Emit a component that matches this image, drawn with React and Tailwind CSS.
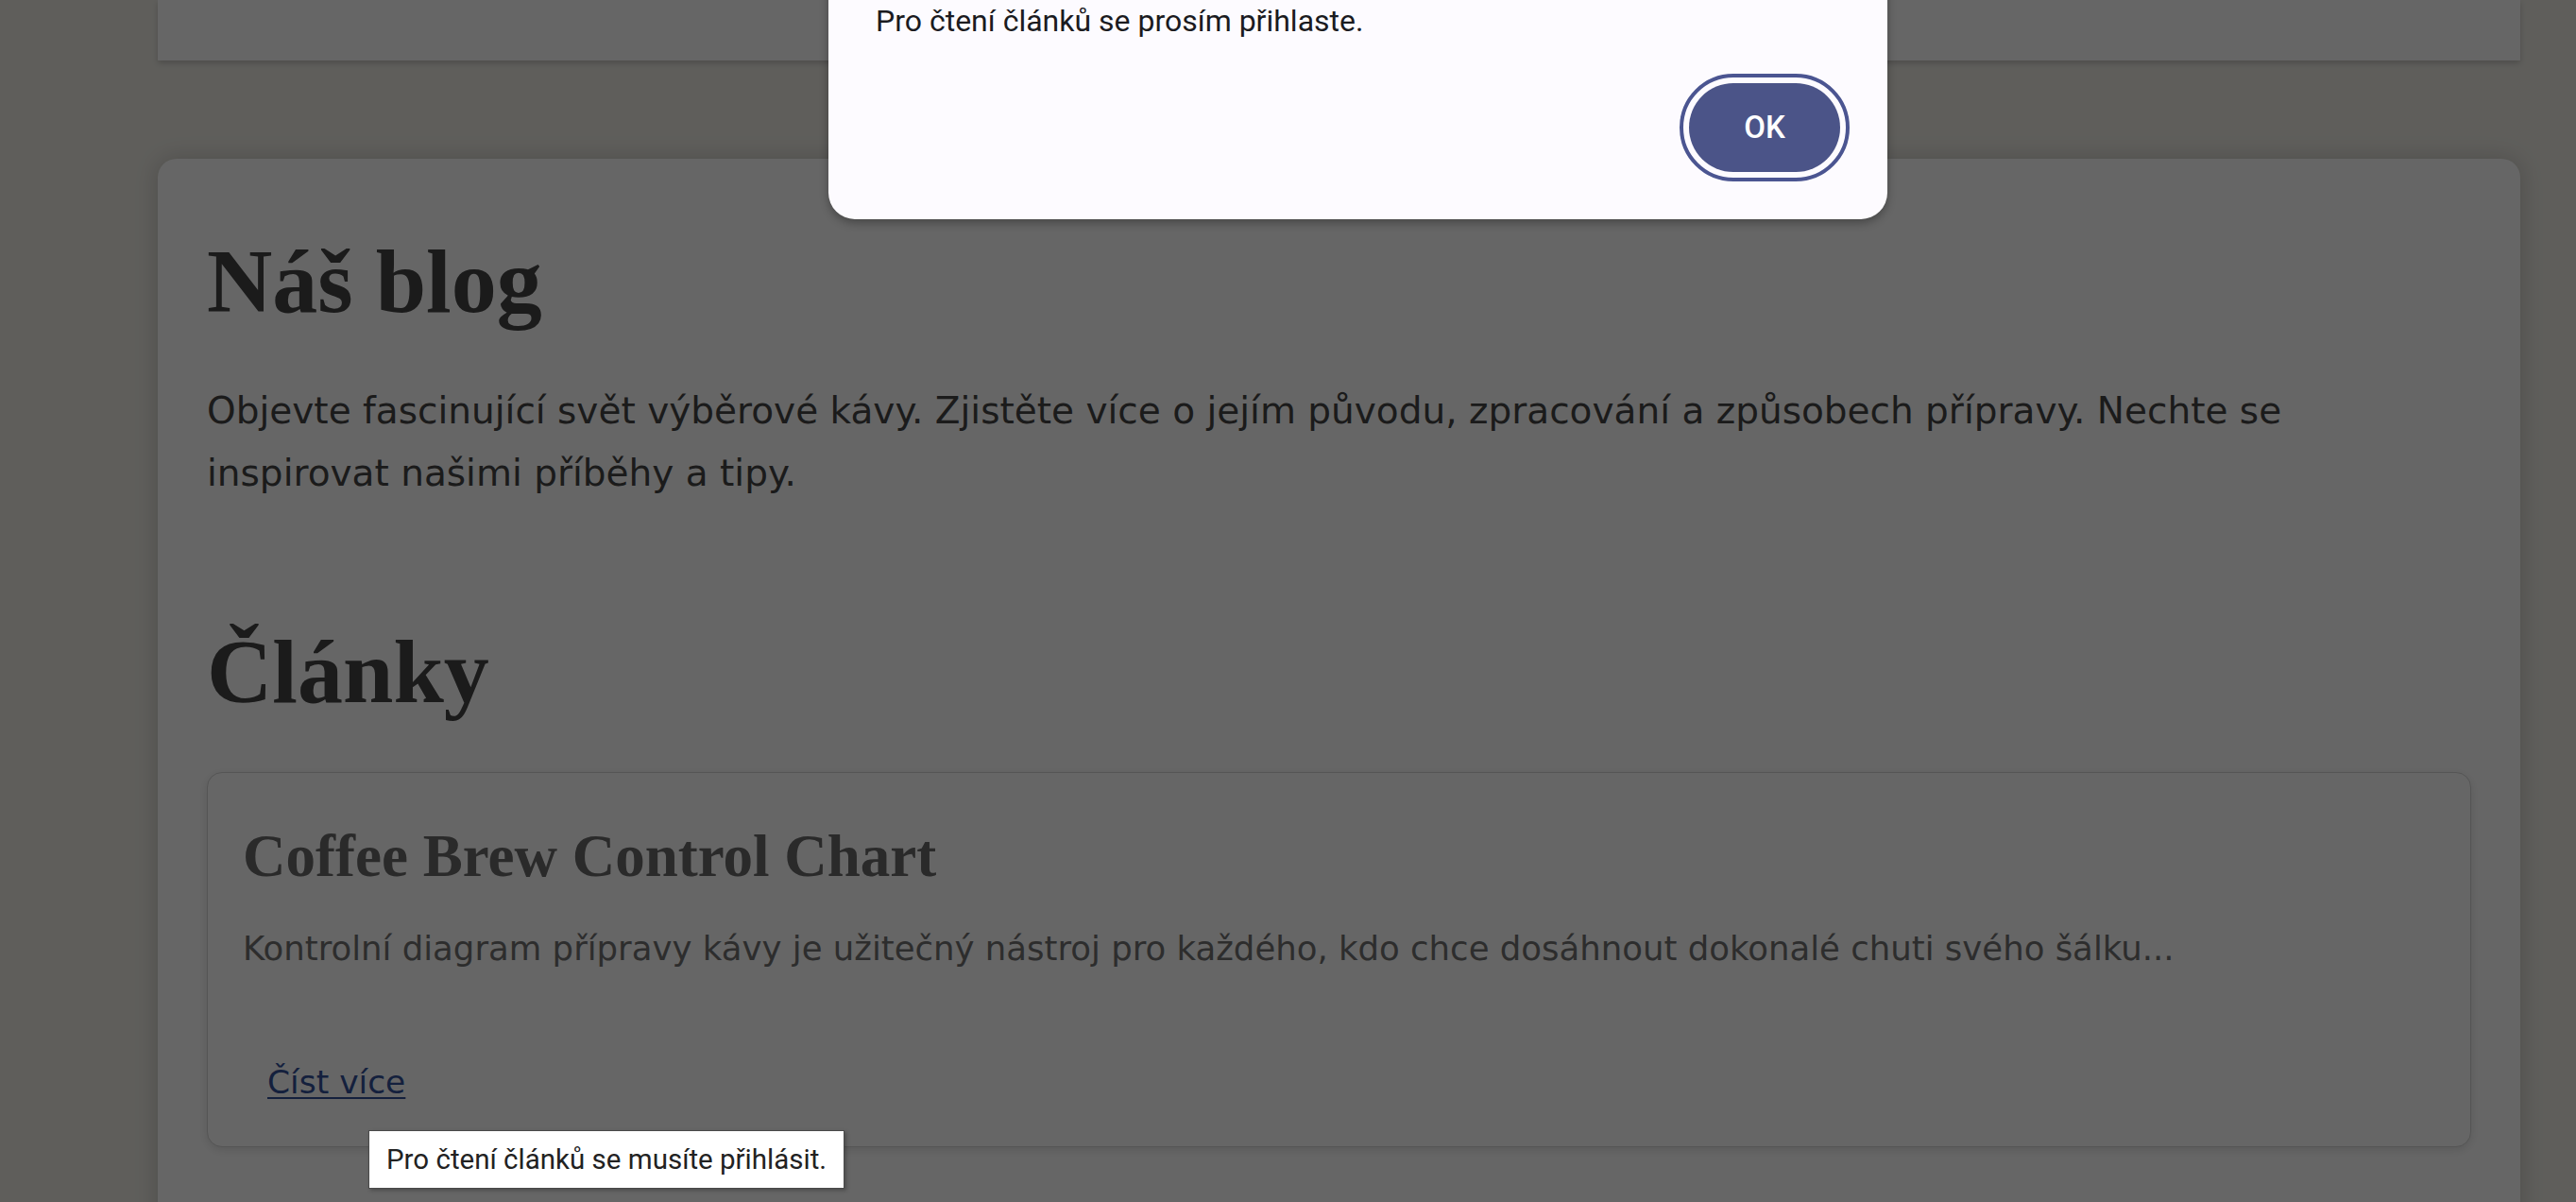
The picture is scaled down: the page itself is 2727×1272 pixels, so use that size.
import React from 'react';

const serif = "font-['Liberation_Serif',serif]";
const body = "font-['DejaVu_Sans',sans-serif]";
const ui = "font-['Segoe_UI',Roboto,sans-serif]";

const Blog = () => {
  return (
    <div className="relative h-[1272px] overflow-hidden bg-[#edebe4] pl-[167px] pr-[59px]">
      {/* header card (scrolled mostly out of view) */}
      <div className="h-[64px] bg-white shadow-[0_3px_6px_rgba(0,0,0,0.18)]" />

      <main className="mt-[104px] rounded-[20px] bg-white px-[52px] pt-[72px] pb-[200px] shadow-[0_0_24px_rgba(0,0,0,0.18)]">
        <h1 className={`${serif} text-[96px] font-bold leading-[115px] text-[#444444]`}>Náš blog</h1>
        <p className={`${body} mt-[47px] max-w-[2300px] text-[39px] leading-[66px] text-[#454545]`}>
          Objevte fascinující svět výběrové kávy. Zjistěte více o jejím původu, zpracování a způsobech přípravy. Nechte se inspirovat našimi příběhy a tipy.
        </p>

        <h2 className={`${serif} mt-[119px] text-[96px] font-bold leading-[115px] text-[#444444]`}>Články</h2>

        <article className="mt-[49px] rounded-[16px] border border-[#d4d4d4] bg-white px-[37px] pt-[49px] pb-[50px] shadow-[0_3px_10px_rgba(0,0,0,0.12)]">
          <h3 className={`${serif} text-[63px] font-bold leading-[78px] text-[#6a6a6a]`}>Coffee Brew Control Chart</h3>
          <p className={`${body} mt-[30px] text-[35.5px] leading-[58px] text-[#727272]`}>
            Kontrolní diagram přípravy kávy je užitečný nástroj pro každého, kdo chce dosáhnout dokonalé chuti svého šálku...
          </p>
          <div className="mt-[94px]">
            <button className={`${body} ml-[26px] text-[34.5px] leading-[36px] text-[#33509a] underline decoration-2 underline-offset-[4px]`}>
              Číst více
            </button>
          </div>
        </article>
      </main>

      {/* modal backdrop */}
      <div className="absolute inset-0 bg-black/60" />

      {/* alert dialog */}
      <div className="absolute left-[877px] top-[-45px] w-[1121px] rounded-[28px] bg-[#fdfbff] px-[50px] pt-[49px] pb-[50px] shadow-[0_4px_10px_rgba(0,0,0,0.3)]">
        <p className={`${ui} text-[32px] leading-[36px] text-[#1b1b1f]`}>Pro čtení článků se prosím přihlaste.</p>
        <div className="mt-[48px] flex justify-end">
          <button className={`${ui} h-[94px] w-[160px] rounded-full bg-[#4b5488] text-[33px] font-medium text-white outline-4 outline-[#4b5591] outline-offset-[6px]`}>
            OK
          </button>
        </div>
      </div>

      {/* native title tooltip */}
      <div className={`${ui} absolute left-[390px] top-[1196px] flex h-[62px] items-center border border-[#4a4a4a] bg-white px-[18px] text-[29.5px] text-[#222222] shadow-[2px_2px_4px_rgba(0,0,0,0.25)]`}>
        Pro čtení článků se musíte přihlásit.
      </div>
    </div>
  );
};

export default function App() {
  return <Blog />;
}
